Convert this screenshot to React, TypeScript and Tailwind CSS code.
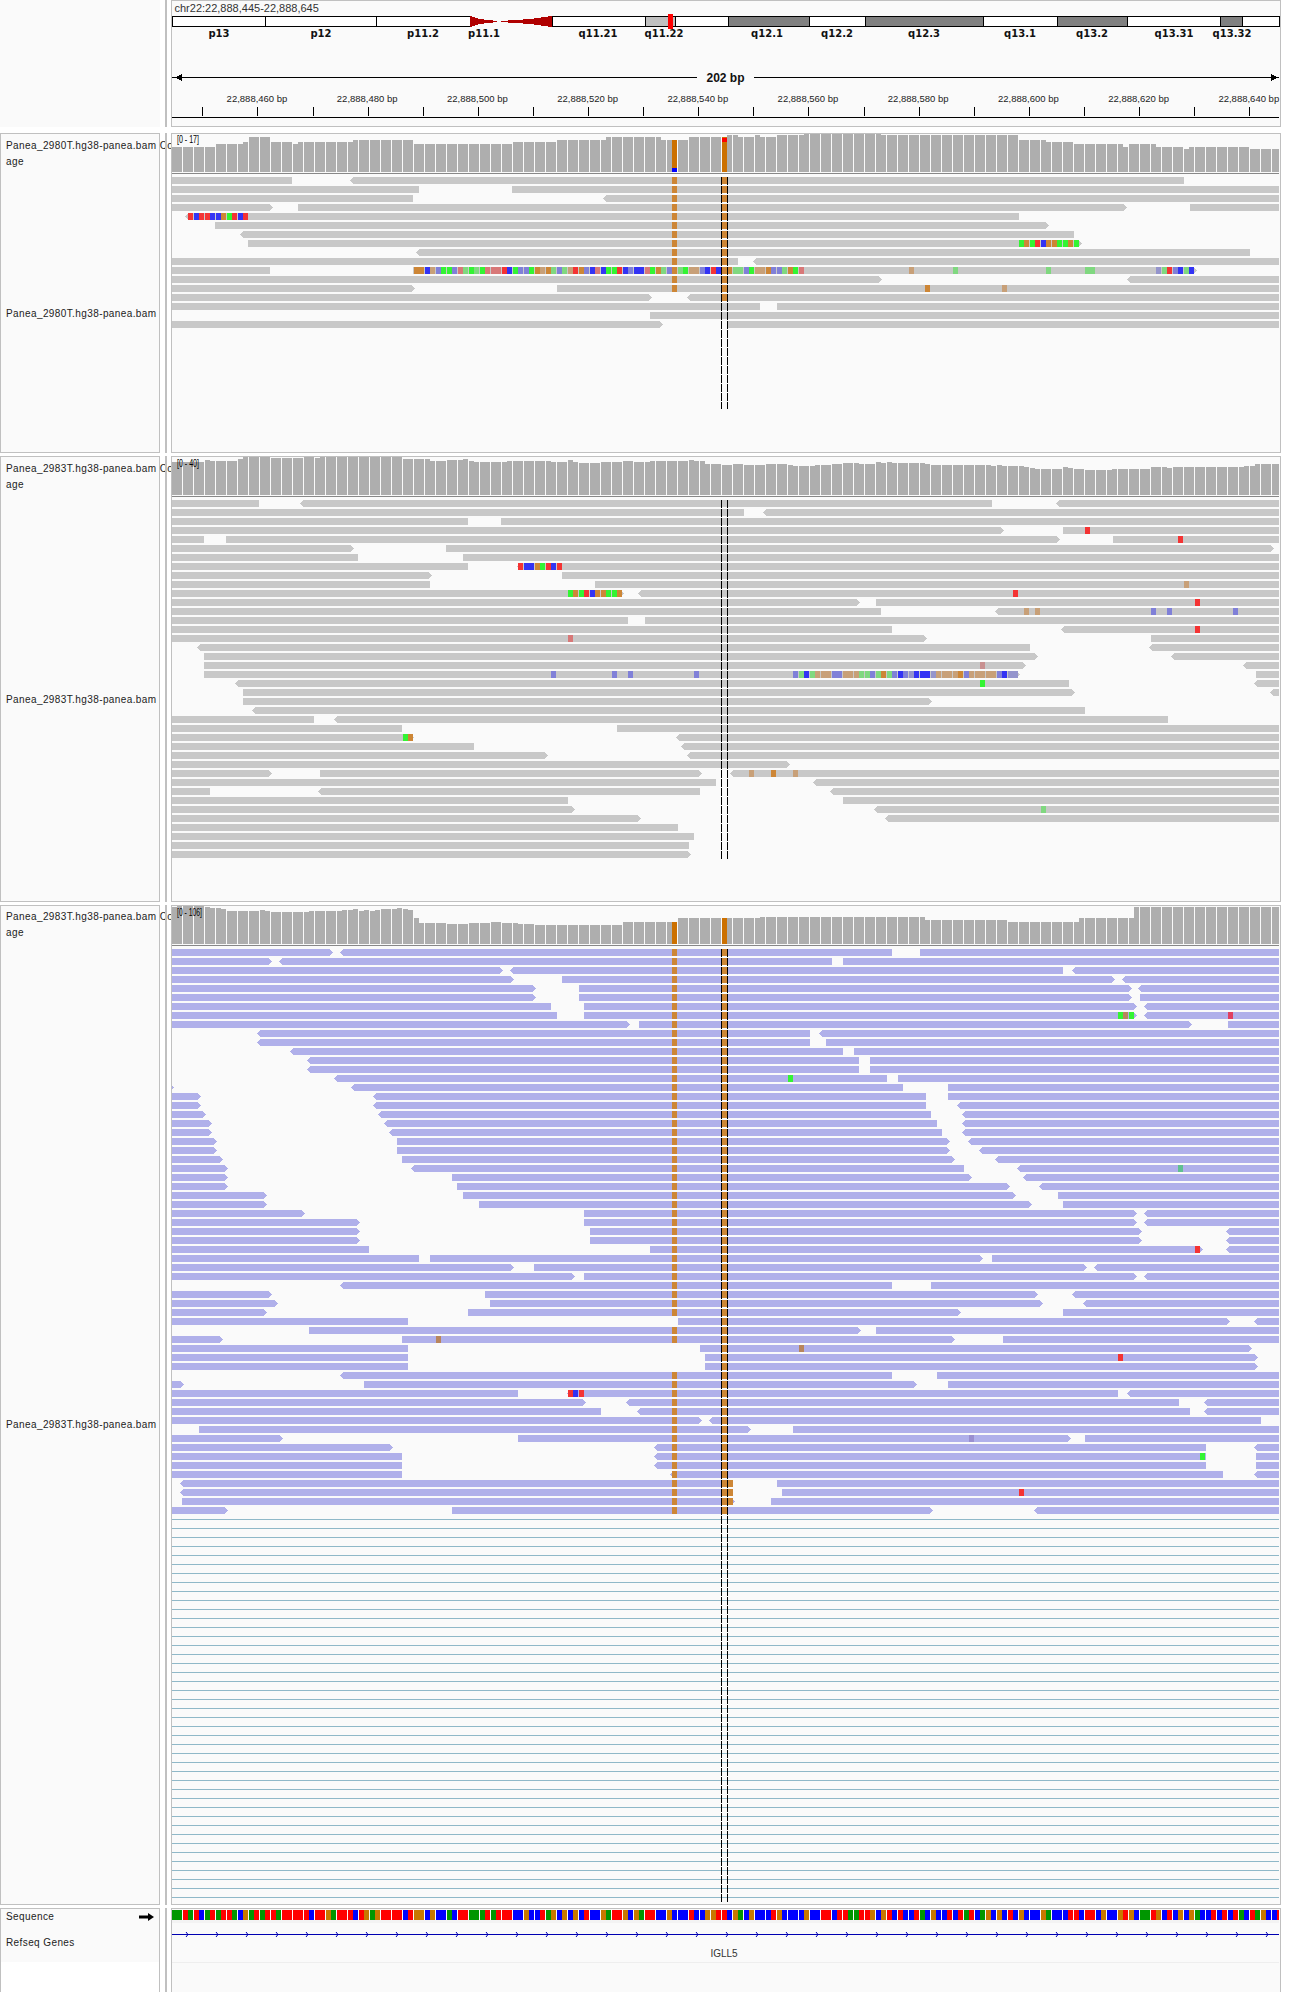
import React from "react";

const COLORS: Record<string, string> = {
  r: "#f43333", b: "#3333f4", g: "#33f433", o: "#cd8636", t: "#c8a078", l: "#8080d8", n: "#80d880",
  p: "#d87878", y: "#9494cc", q: "#e04060", e: "#60c090", k: "#c89090", u: "#9a8fd0", w: "#b8855c",
};

const PITCH = 5.5;
const LEFT = 172;
const RIGHT = 1279;
const baseX = (k: number) => Math.floor(LEFT + PITCH * k);

type Mapper = (t: string) => number;
const map23: Mapper = (t) => (t[0] === "R" ? 725 + Number(t.slice(1)) / 2.774 : 165 + Number(t) / 2.75);
const map1: Mapper = (t) =>
  t[0] === "T" ? 400 + Number(t.slice(1)) / 3 : t[0] === "V" ? 850 + Number(t.slice(1)) / 3 : Number(t) / 3;

type Row = [string, string?];

const T1: Row[] = [
  ["516-876 <1050-V1002"],
  ["516-1257 T336-V1287"],
  ["516-1239 <T610-V1287"],
  ["516-818> 894-V830> V1020-V1287"],
  ["<555-V507", "561r 579b 594r 612r 627b 645b 660o 678g 693r 711b 726r"],
  ["645-V597>"],
  ["<720-V672"],
  ["744-V697>", "V507g V522o V540g V555r V573b V588o V606o V621g V639g V654o V672g"],
  ["<1248-V1200"],
  ["516-T1014 <T1058-V1287"],
  [
    "516-810 T39-V1040>",
    "T39o T54o T72b T88t T105l T120g T138g T153l T171p T186n T204g T219n T237g T252p T270p T285p T303r T318b T336g T351l T369l T385g T402o T419t T435o T452n T468l T486n T501t T519r T534o T552l T567b T585p T600b T618g T633g T651r T666b T684l T699b T717b T732p T750g T765o T783n T798l T831n T849g T864t T882t T897l T915b T930r T948b T984o T996n T1014n T1029l T1047g T1062t T1080t T1095o T1113l T1128l T1146n T1161o T1179g T1194p V177t V309n V588n V705n V720n V918y V936n V951r V969l V984b V1002n V1017b",
  ],
  ["516-V97> <V830-V1287"],
  ["516-1245> T471-V1287", "V225o V456t"],
  ["516-T755> <T860-V1287"],
  ["516-T1080 T1131-V1287"],
  ["T750-V1287"],
  ["516-T790> T985-V1287"],
];

const T2: Row[] = [
  ["18-259 <372-R741 <R917-R1537"],
  ["18-R53 <R105-R1537"],
  ["18-834 924-R1537"],
  ["18-R775> R938-R1537", "R999r"],
  ["18-107 168-R928> R1077-R1537", "R1257r"],
  ["18-520> 773-R1522>"],
  ["18-531 820-R1537"],
  ["18-834 <968-R1537", "968r 985b 1000b 1015o 1031g 1045r 1062b 1076r"],
  ["18-733> 1092-R1537"],
  ["18-729 1183-R1537", "R1274t"],
  ["18-1263> <1300-R1537", "1106g 1122o 1136g 1153r 1166b 1183o 1197o 1213g 1228g 1243o R799r"],
  ["18-R375> R419-R1537", "R1304r"],
  ["18-R433 <R750-R1537", "R830t R860t R1182l R1227l R1410l"],
  ["18-1274 1320-R1537"],
  ["18-R463 <R933-R1537", "R1304r"],
  ["18-R561> R1182-R1537", "1106p"],
  ["<88-R846 <R1177-R1537"],
  ["107-R867> <R1238-R1537"],
  ["107-R836> <R1438-R1537", "R708k"],
  [
    "107-R819> R1474-R1537",
    "1062l 1227l 1274l 1455l R189l R203n R219b R233n R250t R264t R280t R294l R311l R325t R341t R355t R371n R386n R402l R416n R433o R447n R463l R477b R494l R511y R525b R541b R555b R572y R586t R602t R617t R632t R647o R663l R677t R694t R708t R724t R738t R755l R769b R785y R799y",
  ],
  ["<192-R955 <R1468-R1537", "R708g"],
  ["215-R972> <R1513-R1537"],
  ["215-R575>"],
  ["<240-R999"],
  ["18-410 <465-R1229"],
  ["18-652 1243-R1537"],
  ["18-686> <1405-R1537", "652g 666o"],
  ["18-850 <1420-R1537"],
  ["18-1052> <1436-R1537"],
  ["18-R179>"],
  ["18-293> 426-1476> <R15-R1537", "R67t R128o R189t"],
  ["18-1516 <R243-R1537"],
  ["18-124 <420-1472 <R290-R1537"],
  ["18-1109 R327-R1537"],
  ["18-1127> <R413-R1537", "R877n"],
  ["18-1308> <R443-R1537"],
  ["18-1411"],
  ["18-1455"],
  ["18-1441"],
  ["18-1447>"],
];

const T3: Row[] = [
  ["18-462> <481-R463 R541-R1537"],
  ["18-295> <313-R297 R327-R1537"],
  ["18-930> <948-R938 <R962-R1537"],
  ["18-960> 1092-R1082> <R1102-R1537"],
  ["18-1021> 1139-R1128> <R1145-R1537"],
  ["18-1021> 1139-R1128> R1152-R1537"],
  ["18-1062 1153-R1143> <R1162-R1537"],
  ["18-1078 1153-R1143> <R1162-R1537", "R1091g R1105w R1121g R1396q"],
  ["18-1279> 1304-R1296> R1396-R1537"],
  ["<252-R236 <R260-R1537"],
  ["<252-R236 R280-R1537"],
  ["<344-R327 R358-R1537"],
  ["<390-R372 R402-R1537"],
  ["<390-R372 R402-R1537"],
  ["<465-R450 R480-R1537", "R172g"],
  ["18-24> <512-R494 R619-R1537"],
  ["18-100> <571-R558 R619-R1537"],
  ["18-100> <571-R558 <R643-R1537"],
  ["18-114> <585-R572 <R657-R1537"],
  ["18-129> <603-R588 <R657-R1537"],
  ["18-129> <615-R602 <R657-R1537"],
  ["18-144> 638-R624> <R675-R1537"],
  ["18-144> 638-R624> <R704-R1537"],
  ["18-159> 652-R638> <R750-R1537"],
  ["18-174> <677-R663 <R810-R1537", "R1257e"],
  ["18-174> 790-R686> <R827-R1537"],
  ["18-174> 803-R791> <R872-R1537"],
  ["18-281> 820-R807> R924-R1537"],
  ["18-281> 864-R852> R938-R1537"],
  ["18-385> 1153-R1143> <R1162-R1537"],
  ["18-537> 1153-R1143> <R1162-R1537"],
  ["18-537> 1169-R1157> <R1390-R1537"],
  ["18-537> 1169-R1157> <R1390-R1537"],
  ["18-561 1334-R1325> <R1390-R1537", "R1304r"],
  ["18-699 729-R716> R741-R1537"],
  ["18-960> 1015-R1004> <R1023-R1537"],
  ["18-1127> 1153-R1142> <R1162-R1537"],
  ["<481-R463 R572-R1537"],
  ["18-295> 880-R868> <R962-R1537"],
  ["18-312> 894-R882> <R993-R1537"],
  ["18-281> 834-R654> R938-R1537"],
  ["18-668 1411-R1401> <R1467-R1537"],
  ["396-R377> R419-R1537"],
  ["18-160> 652-R637> R772-R1537", "743w"],
  ["18-668 1472-R1462>", "R203w"],
  ["18-668 1485-R1478>", "R1091r"],
  ["18-668 1485-R1478>"],
  ["<481-R463 R588-R1537"],
  ["18-52> 547-R532> R619-R1537"],
  ["18-971 <1105-R1091 <R1115-R1537", "1105r 1122b 1136r"],
  ["18-1158> <1267-R1260 <R1330-R1537"],
  ["18-1199 <1298-R1290 <R1330-R1537"],
  ["18-1477> <1496-R1488"],
  ["94-R72> R189-R1537"],
  ["18-325> 971-R960> R999-R1537", "R677u"],
  ["18-627> <1345-R1335 <R1467-R1537"],
  ["18-652 <1345-R1335 R1474-R1537", "R1318g"],
  ["18-652 <1345-R1335 R1474-R1537"],
  ["18-652 <1390-R1382 <R1467-R1537"],
  ["<40-R22 R144-R1537"],
  ["<40-R21 R158-R1537", "R816r"],
  ["47-R28> R128-R1537"],
  ["18-174> 790-R577> <R857-R1537"],
];

function Reads({ rows, y0, color, map, colA, colB }: {
  rows: Row[]; y0: number; color: string; map: Mapper; colA: (i: number) => boolean; colB: (i: number) => boolean;
}) {
  const out: React.ReactNode[] = [];
  rows.forEach(([segs, mism], i) => {
    const y = y0 + i * 9;
    segs.split(" ").forEach((tok, j) => {
      const m = tok.match(/^(<?)([RTV]?\d+)-([RTV]?\d+)(>?)$/);
      if (!m) return;
      const s = Math.max(LEFT, Math.round(map(m[2])));
      const e = Math.min(RIGHT, Math.round(map(m[3])));
      if (m[1] || m[4]) {
        const l = m[1] ? `${s},${y + 3.5} ${s + 3},${y}` : `${s},${y}`;
        const r = m[4] ? `${e - 3},${y} ${e},${y + 3.5} ${e - 3},${y + 7}` : `${e},${y} ${e},${y + 7}`;
        const back = m[1] ? `${s + 3},${y + 7}` : `${s},${y + 7}`;
        out.push(<polygon key={`${i}-${j}`} points={`${l} ${r} ${back}`} fill={color} />);
      } else {
        out.push(<rect key={`${i}-${j}`} x={s} y={y} width={e - s} height={7} fill={color} />);
      }
    });
    if (colA(i)) out.push(<rect key={`a${i}`} x={baseX(91)} y={y} width={5} height={7} fill="#cd8636" />);
    if (colB(i)) out.push(<rect key={`b${i}`} x={baseX(100)} y={y} width={5} height={7} fill="#cd8636" />);
    (mism ?? "").split(" ").filter(Boolean).forEach((tok, j) => {
      const c = tok[tok.length - 1];
      const x = map(tok.slice(0, -1));
      const k = Math.round((x - LEFT) / PITCH);
      out.push(<rect key={`m${i}-${j}`} x={baseX(k)} y={y} width={5} height={7} fill={COLORS[c]} />);
    });
  });
  return <g shapeRendering="crispEdges">{out}</g>;
}

type Runs = [number, number][];
const C1: Runs = [[8, 50], [5, 42], [1, 36], [4, 21], [4, 36], [1, 42], [10, 36], [11, 30], [7, 42], [11, 42], [8, 36], [9, 30], [10, 21], [2, 30], [1, 30], [2, 30], [6, 21], [1, 21], [2, 15], [3, 21], [1, 15], [3, 21], [5, 15], [14, 12], [25, 15], [5, 30], [5, 36], [9, 42], [1, 51], [5, 42], [5, 51], [1, 57], [11, 51], [7, 57]];
const C2: Runs = [[6, 18], [1, 12], [5, 15], [1, 9], [5, 3], [6, 6], [2, 3], [1, 6], [15, 3], [5, 9], [3, 15], [3, 12], [1, 9], [1, 15], [6, 18], [8, 15], [3, 18], [1, 12], [1, 18], [4, 21], [4, 18], [2, 15], [3, 18], [7, 15], [1, 12], [2, 15], [3, 24], [2, 27], [2, 24], [4, 27], [4, 24], [1, 27], [4, 30], [3, 27], [2, 24], [3, 21], [3, 24], [1, 18], [1, 21], [1, 18], [6, 21], [1, 24], [11, 27], [1, 30], [1, 27], [4, 30], [1, 33], [1, 36], [5, 39], [1, 33], [1, 36], [2, 39], [5, 42], [7, 39], [3, 33], [1, 36], [13, 33], [2, 30], [6, 24]];
const C3: Runs = [[1, 21], [5, 16], [1, 20], [2, 24], [1, 27], [6, 33], [1, 30], [1, 33], [7, 36], [6, 33], [2, 30], [1, 27], [1, 33], [1, 30], [1, 33], [1, 30], [3, 27], [1, 24], [1, 27], [1, 30], [1, 54], [5, 69], [4, 72], [4, 69], [2, 66], [3, 69], [3, 72], [16, 75], [10, 66], [15, 54], [30, 51], [15, 60], [13, 66], [10, 54], [30, 21]];

function Coverage({ runs, top, bottom, special }: { runs: Runs; top: number; bottom: number; special: (i: number, x: number, y: number) => React.ReactNode }) {
  const bars: React.ReactNode[] = [];
  let i = 0;
  runs.forEach(([n, a]) => {
    for (let q = 0; q < n; q++, i++) {
      const x = baseX(i);
      if (x >= RIGHT) return;
      const y = top + Math.round(a / 3);
      const sp = special(i, x, y);
      bars.push(sp ? <g key={i}>{sp}</g> : <rect key={i} x={x} y={y} width={Math.min(5, RIGHT - x)} height={bottom - y} fill="#aeaeae" />);
    }
  });
  return (
    <g shapeRendering="crispEdges">
      {bars}
      <rect x={LEFT} y={bottom + 1} width={RIGHT - LEFT} height={1} fill="#888888" />
    </g>
  );
}

function Dashes({ y1, y2 }: { y1: number; y2: number }) {
  return (
    <g stroke="#000000" strokeWidth={1} strokeDasharray="8 1" shapeRendering="crispEdges">
      <line x1={721.5} x2={721.5} y1={y1} y2={y2} />
      <line x1={727.5} x2={727.5} y1={y1} y2={y2} />
    </g>
  );
}

function Range({ y, text, len }: { y: number; text: string; len: number }) {
  return (
    <text x={177} y={y} fontSize={11} fill="#000000" textLength={len} lengthAdjust="spacingAndGlyphs">
      {text}
    </text>
  );
}

const BANDS: [number, number, string, string, number][] = [
  [172, 265, "#ffffff", "p13", 219],
  [265, 376, "#ffffff", "p12", 321],
  [376, 470, "#ffffff", "p11.2", 423],
  [552, 645, "#ffffff", "q11.21", 598],
  [645, 675, "#c0c0c0", "q11.22", 664],
  [675, 728, "#ffffff", "", 0],
  [728, 809, "#808080", "q12.1", 767],
  [809, 865, "#ffffff", "q12.2", 837],
  [865, 983, "#808080", "q12.3", 924],
  [983, 1057, "#ffffff", "q13.1", 1020],
  [1057, 1127, "#808080", "q13.2", 1092],
  [1127, 1220, "#ffffff", "q13.31", 1174],
  [1220, 1242, "#808080", "q13.32", 1232],
  [1242, 1279, "#ffffff", "", 0],
];

function Header() {
  const ticks = Array.from({ length: 20 }, (_, k) => Math.round(202.3 + 55.1 * k));
  const labels = [460, 480, 500, 520, 540, 560, 580, 600, 620, 640];
  return (
    <svg viewBox="172 1 1108 125" className="block h-[125px] w-[1108px]">
      <text x={174.5} y={12} fontSize={11} fill="#333333">chr22:22,888,445-22,888,645</text>
      <g shapeRendering="crispEdges">
        {BANDS.map(([a, b, fill], i) => (
          <rect key={i} x={a + 0.5} y={16.5} width={b - a} height={10} fill={fill} stroke="#000000" />
        ))}
        <polygon points="470,16 470,27 480,24 497,22 497,21 480,19" fill="#b00000" />
        <polygon points="552,16 552,27 530,24 515,23 501,22 501,21 515,20 530,19" fill="#b00000" />
        <rect x={668} y={14} width={5} height={15} fill="#ff0000" />
      </g>
      {BANDS.filter((b) => b[3]).map(([, , , t, c]) => (
        <text key={t} x={c} y={37} textAnchor="middle" fontSize={10} fontWeight={700} fill="#111111" className="font-['DejaVu_Sans',sans-serif]">{t}</text>
      ))}
      <text x={484} y={37} textAnchor="middle" fontSize={10} fontWeight={700} fill="#111111" className="font-['DejaVu_Sans',sans-serif]">p11.1</text>
      <g shapeRendering="crispEdges">
        <rect x={172} y={77} width={525} height={1} fill="#000000" />
        <rect x={754} y={77} width={525} height={1} fill="#000000" />
        <polygon points="175,77.5 182,74 182,81" fill="#000000" />
        <polygon points="1278,77.5 1271,74 1271,81" fill="#000000" />
      </g>
      <text x={725.5} y={82} textAnchor="middle" fontSize={12} fontWeight={700} fill="#111111">202 bp</text>
      {labels.map((n, k) => (
        <text key={n} x={257 + 110.2 * k} y={102} textAnchor="middle" fontSize={9.5} fill="#222222">{`22,888,${n} bp`}</text>
      ))}
      <g shapeRendering="crispEdges" fill="#000000">
        {ticks.map((x) => <rect key={x} x={x} y={107} width={1} height={9} />)}
        <rect x={172} y={117} width={1107} height={1} />
      </g>
    </svg>
  );
}

function Track1() {
  return (
    <svg viewBox="172 134 1108 318" className="block h-[318px] w-[1108px]">
      <Coverage
        runs={C1}
        top={130}
        bottom={172}
        special={(i, x, y) =>
          i === 91 ? (
            <>
              <rect x={x} y={y} width={5} height={172 - y} fill="#cc7000" />
              <rect x={x} y={168} width={5} height={4} fill="#0000ff" />
            </>
          ) : i === 100 ? (
            <>
              <rect x={x} y={y} width={5} height={172 - y} fill="#cc7000" />
              <rect x={x} y={y + 1} width={5} height={4} fill="#ff0000" />
            </>
          ) : null
        }
      />
      <Range y={143} text="[0 - 17]" len={22} />
      <Reads rows={T1} y0={177} color="#c8c8c8" map={map1} colA={(i) => i <= 12} colB={(i) => i <= 13} />
      <Dashes y1={177} y2={409} />
    </svg>
  );
}

function Track2() {
  return (
    <svg viewBox="172 457 1108 444" className="block h-[444px] w-[1108px]">
      <Coverage runs={C2} top={456} bottom={495} special={() => null} />
      <Range y={467} text="[0 - 40]" len={22} />
      <Reads rows={T2} y0={500} color="#c8c8c8" map={map23} colA={() => false} colB={() => false} />
      <Dashes y1={500} y2={859} />
    </svg>
  );
}

function Track3() {
  const lines = Array.from({ length: 43 }, (_, i) => 1519 + i * 9);
  return (
    <svg viewBox="172 906 1108 998" className="block h-[998px] w-[1108px]">
      <Coverage
        runs={C3}
        top={900}
        bottom={944}
        special={(i, x, y) => (i === 91 || i === 100 ? <rect x={x} y={y} width={5} height={944 - y} fill="#cc7000" /> : null)}
      />
      <Range y={916} text="[0 - 106]" len={25} />
      <Reads
        rows={T3}
        y0={949}
        color="#b0b0ea"
        map={map23}
        colA={(i) => !(i === 41 || (i >= 44 && i <= 46))}
        colB={() => true}
      />
      <g shapeRendering="crispEdges" fill="#cd8636">
        {[59, 60, 61].map((i) => <rect key={i} x={728} y={949 + i * 9} width={5} height={7} />)}
      </g>
      <g shapeRendering="crispEdges" fill="#8fb8c8">
        {lines.map((y) => <rect key={y} x={LEFT} y={y} width={RIGHT - LEFT} height={1} />)}
      </g>
      <Dashes y1={949} y2={1902} />
    </svg>
  );
}

const SEQ =
  "GGTGTCGTGTTGCAGTGTTGTTTTTCTTAGTTTCTAGATTTTCTAACACCGCTTGGGTGTTTCCACCTGACACACTCCAGTTACAGTTCCACCCTCCAATTCAGCACCCTACCCCACCTTCTTGGTTACATCTCCTGCACCTCTGTCGACACTCACCCAGCCCTTCTTCACCATACGGTACTCACAGCCTCTCTGCTGACCTCC";
const SEQ_COLOR: Record<string, string> = { G: "#009600", T: "#ff0000", C: "#0000ff", A: "#c87800" };

function SeqTrack() {
  const chev = Array.from({ length: 37 }, (_, i) => 186 + i * 30);
  return (
    <svg viewBox="172 1909 1108 83" className="block h-[83px] w-[1108px]">
      <g shapeRendering="crispEdges">
        {SEQ.split("").slice(0, 202).map((c, i) => (
          <rect key={i} x={baseX(i)} y={1910} width={Math.min(5, RIGHT - baseX(i))} height={10} fill={SEQ_COLOR[c]} />
        ))}
        <rect x={LEFT} y={1920} width={1107} height={3} fill="#f3f3f3" />
        <rect x={LEFT} y={1934} width={1107} height={1} fill="#0000b2" />
        <rect x={LEFT} y={1962} width={1107} height={1} fill="#eeeeee" />
      </g>
      <g fill="none" stroke="#0000b2" strokeWidth={1}>
        {chev.map((x) => <path key={x} d={`M${x},1932 L${x + 2},1934.5 L${x},1937`} />)}
      </g>
      <text x={724} y={1957} textAnchor="middle" fontSize={10} fill="#333333">IGLL5</text>
    </svg>
  );
}

function Separator() {
  return <div className="ml-[5px] w-[2px] shrink-0 bg-[#c0c0c0]" />;
}

const nameCls = "whitespace-nowrap text-[10px] leading-4 tracking-[0.4px] text-[#222222]";
const sideCls = "w-[160px] shrink-0 border border-[#c0c0c0] bg-[#fafafa] pl-[5px]";
const dataCls = "ml-[4px] w-[1110px] shrink-0 border border-[#c0c0c0] bg-[#fafafa]";

export default function App() {
  return (
    <div className="h-[1992px] w-[1299px] overflow-hidden bg-white font-['Liberation_Sans',Arial,sans-serif]">
      <div className="flex h-[127px]">
        <div className="w-[160px] shrink-0 bg-[#fafafa]" />
        <Separator />
        <div className={dataCls}><Header /></div>
      </div>

      <div className="mt-[6px] flex h-[320px]">
        <div className={`${sideCls} pt-[4px]`}>
          <div className={nameCls}>Panea_2980T.hg38-panea.bam Co</div>
          <div className={nameCls}>age</div>
          <div className={`${nameCls} mt-[136px]`}>Panea_2980T.hg38-panea.bam</div>
        </div>
        <Separator />
        <div className={dataCls}><Track1 /></div>
      </div>

      <div className="mt-[3px] flex h-[446px]">
        <div className={`${sideCls} pt-[4px]`}>
          <div className={nameCls}>Panea_2983T.hg38-panea.bam Co</div>
          <div className={nameCls}>age</div>
          <div className={`${nameCls} mt-[199px]`}>Panea_2983T.hg38-panea.bam</div>
        </div>
        <Separator />
        <div className={dataCls}><Track2 /></div>
      </div>

      <div className="mt-[3px] flex h-[1000px]">
        <div className={`${sideCls} pt-[3px]`}>
          <div className={nameCls}>Panea_2983T.hg38-panea.bam Co</div>
          <div className={nameCls}>age</div>
          <div className={`${nameCls} mt-[476px]`}>Panea_2983T.hg38-panea.bam</div>
        </div>
        <Separator />
        <div className={dataCls}><Track3 /></div>
      </div>

      <div className="mt-[3px] flex h-[84px]">
        <div className="w-[160px] shrink-0 border border-b-0 border-[#c0c0c0] bg-white">
          <div className="h-[53px] bg-[#fafafa] pl-[5px] pr-[5px]">
            <div className="flex items-center justify-between">
              <span className={nameCls}>Sequence</span>
              <svg viewBox="0 0 15 8" className="h-[8px] w-[15px]">
                <path d="M0 2.5h9V0l6 4-6 4V5.500H0z" fill="#000000" />
              </svg>
            </div>
            <div className={`${nameCls} mt-[10px]`}>Refseq Genes</div>
          </div>
        </div>
        <Separator />
        <div className="ml-[4px] w-[1110px] shrink-0 border border-b-0 border-[#c0c0c0] bg-[#fafafa]"><SeqTrack /></div>
      </div>
    </div>
  );
}
